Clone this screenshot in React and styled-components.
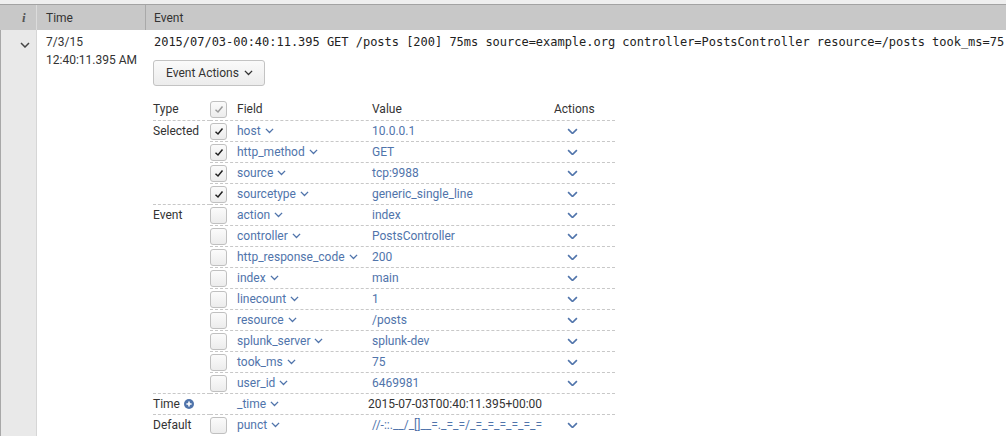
import React from 'react';
import styled, { createGlobalStyle } from 'styled-components';

const text = '#333333';
const link = '#5074ab';
const dash = '#c8c8c8';

const GlobalStyle = createGlobalStyle`
  html, body {
    margin: 0;
    padding: 0;
    background: #ffffff;
    font-family: Roboto, "Liberation Sans", sans-serif;
    font-size: 12px;
    color: ${ text };
  }
`;

const Page = styled.div`
  width: 1006px;
  height: 436px;
  overflow: hidden;
  border-top: 4px solid #efefef;
`;

const HeaderBar = styled.div`
  display: grid;
  grid-template-columns: 37px 109px 1fr;
  height: 25px;
  background: #c8c8c8;
  border-top: 1px solid #a3a3a3;
`;

const HeadCell = styled.div`
  display: flex;
  align-items: center;
  padding-left: ${ p => p.$pad || 8 }px;
  border-right: 1px solid ${ p => p.$line || 'transparent' };
  font-size: 12px;
  color: ${ text };
`;

const InfoMark = styled.span`
  font-family: "Liberation Serif", serif;
  font-style: italic;
  font-weight: bold;
  font-size: 13px;
  color: #555;
  margin-left: 14px;
`;

const Body = styled.div`
  display: grid;
  grid-template-columns: 37px 109px 1fr;
  height: 406px;
`;

const ToggleCell = styled.div`
  background: #e9e9e9;
  border-left: 1px solid #a8a8a8;
  border-right: 1px solid #d6d6d6;
  display: flex;
  justify-content: center;
  padding-top: 7px;
  padding-left: 12px;
`;

const TimeCell = styled.div`
  padding: 3px 0 0 9px;
  line-height: 18px;
`;

const EventCell = styled.div`
  padding: 3px 0 0 7px;
`;

const Raw = styled.div`
  padding-left: 1px;
  font-family: "DejaVu Sans Mono", "Liberation Mono", monospace;
  font-size: 12px;
  line-height: 18px;
  letter-spacing: -0.02px;
  color: #222;
  white-space: nowrap;
`;

const ActionsButton = styled.button`
  margin-top: 9px;
  height: 26px;
  width: 112px;
  padding: 0 0 0 12px;
  display: flex;
  align-items: center;
  gap: 5px;
  border: 1px solid #c3c3c3;
  border-radius: 3px;
  background: linear-gradient(#fafafa, #ececec);
  font-family: Roboto, "Liberation Sans", sans-serif;
  font-size: 12px;
  color: ${ text };
`;

const FieldTable = styled.div`
  margin-top: 11px;
  width: 462px;
`;

const Row = styled.div`
  display: flex;
  height: ${ p => p.$head ? 23 : 21 }px;
`;

const TypeCol = styled.div`
  width: 57px;
  display: flex;
  align-items: center;
  gap: 4px;
  border-top: 1px dashed ${ p => p.$line ? dash : 'transparent' };
`;

const Rest = styled.div`
  flex: 1;
  display: grid;
  grid-template-columns: 27px 135px 182px 1fr;
  align-items: center;
  border-top: 1px dashed ${ p => p.$line ? dash : 'transparent' };
`;

const Box = styled.span`
  width: 15px;
  height: 15px;
  border: 1px solid #c0c0c0;
  border-radius: 3px;
  background: linear-gradient(#fbfbfb, #ececec);
  display: flex;
  align-items: center;
  justify-content: center;
`;

const FieldName = styled.span`
  color: ${ p => p.$plain ? text : link };
  display: flex;
  align-items: center;
  gap: 4px;
  margin-left: ${ p => p.$shift || 0 }px;
  white-space: nowrap;
`;

const ActionCol = styled.span`
  display: flex;
  align-items: center;
  padding-left: ${ p => p.$icon ? 13 : 0 }px;
  color: ${ text };
`;

const Chevron = ({ color = link, size = 9, weight = 1.5 }) => (
  <svg width={size} height={size * 0.6} viewBox="0 0 10 6">
    <path d="M1 1 L5 5 L9 1" fill="none" stroke={color} strokeWidth={weight} />
  </svg>
);

const Check = ({ color = '#1f1f1f' }) => (
  <svg width="10" height="9" viewBox="0 0 10 9">
    <path d="M1.5 4.8 L4 7 L8.5 1.5" fill="none" stroke={color} strokeWidth="1.5" />
  </svg>
);

const PlusCircle = () => (
  <svg width="10" height="10" viewBox="0 0 10 10">
    <circle cx="5" cy="5" r="5" fill={link} />
    <path d="M5 2.4 V7.6 M2.4 5 H7.6" stroke="#fff" strokeWidth="1.6" />
  </svg>
);

const groups = [
  {
    type: 'Selected',
    rows: [
      ['host', '10.0.0.1'],
      ['http_method', 'GET'],
      ['source', 'tcp:9988'],
      ['sourcetype', 'generic_single_line'],
    ],
    checked: true,
  },
  {
    type: 'Event',
    rows: [
      ['action', 'index'],
      ['controller', 'PostsController'],
      ['http_response_code', '200'],
      ['index', 'main'],
      ['linecount', '1'],
      ['resource', '/posts'],
      ['splunk_server', 'splunk-dev'],
      ['took_ms', '75'],
      ['user_id', '6469981'],
    ],
  },
  {
    type: 'Time',
    icon: true,
    rows: [['_time', '2015-07-03T00:40:11.395+00:00']],
    noBox: true,
    plainValue: true,
    noAction: true,
  },
  {
    type: 'Default',
    rows: [['punct', '//-::.__/_[]__=._=_=/_=_=_=_=_=_=']],
  },
];

const App = () => (
  <Page>
    <GlobalStyle />
    <HeaderBar>
      <HeadCell $pad={0} $line="#dcdcdc"><InfoMark>i</InfoMark></HeadCell>
      <HeadCell $pad={9} $line="#a9a9a9">Time</HeadCell>
      <HeadCell $pad={8}>Event</HeadCell>
    </HeaderBar>
    <Body>
      <ToggleCell>
        <div><Chevron color="#444" size={10} /></div>
      </ToggleCell>
      <TimeCell>
        <div>7/3/15</div>
        <div>12:40:11.395 AM</div>
      </TimeCell>
      <EventCell>
        <Raw>
          2015/07/03-00:40:11.395 GET /posts [200] 75ms source=example.org controller=PostsController resource=/posts took_ms=75
        </Raw>
        <ActionsButton>
          Event Actions <Chevron color="#333" />
        </ActionsButton>
        <FieldTable>
          <Row $head>
            <TypeCol>Type</TypeCol>
            <Rest>
              <Box><Check color="#9a9a9a" /></Box>
              <FieldName $plain>Field</FieldName>
              <FieldName $plain>Value</FieldName>
              <ActionCol>Actions</ActionCol>
            </Rest>
          </Row>
          {groups.map(g =>
            g.rows.map(([name, value], i) => (
              <Row key={name}>
                <TypeCol $line={i === 0}>
                  {i === 0 && g.type}
                  {i === 0 && g.icon && <PlusCircle />}
                </TypeCol>
                <Rest $line>
                  {g.noBox ? <span /> : <Box>{g.checked && <Check />}</Box>}
                  <FieldName>{name} <Chevron /></FieldName>
                  <FieldName $plain={g.plainValue} $shift={g.plainValue ? -4 : 0}>{value}</FieldName>
                  <ActionCol $icon>{!g.noAction && <Chevron size={11} />}</ActionCol>
                </Rest>
              </Row>
            ))
          )}
        </FieldTable>
      </EventCell>
    </Body>
  </Page>
);

export default App;
